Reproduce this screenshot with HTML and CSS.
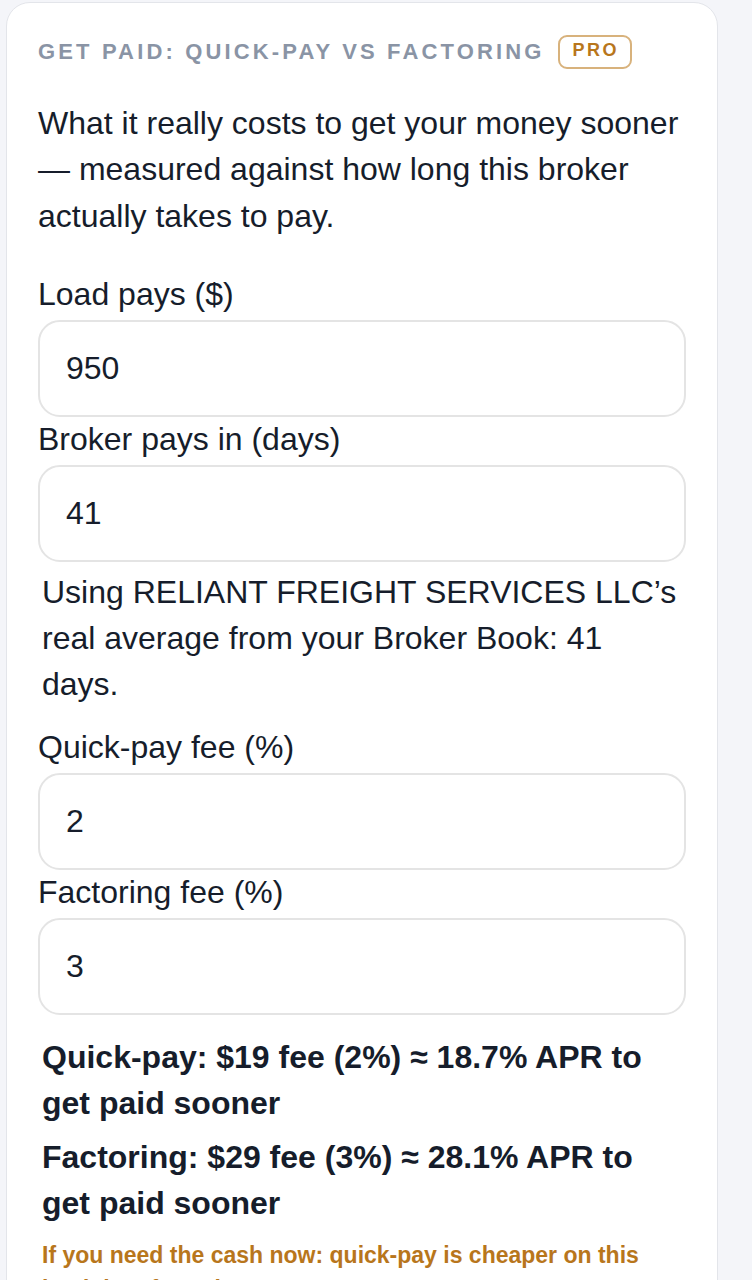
FILE: index.html
```html
<!DOCTYPE html>
<html>
<head>
	<meta charset="utf-8">
	<meta name="viewport" content="width=device-width, initial-scale=1">
	<title>Get paid: quick-pay vs factoring</title>
	<link rel="stylesheet" href="styles.css">
</head>
<body>

  <section class="card">

    <header class="card-head">
      <h2 class="card-title">Get paid: Quick-pay vs factoring</h2>
      <span class="badge">PRO</span>
    </header>

    <p class="intro">What it really costs to get your money sooner — measured against how long this broker actually takes to pay.</p>

    <form class="calc">
      <label for="load">Load pays ($)</label>
      <input type="text" id="load" name="load" value="950">

      <label for="days">Broker pays in (days)</label>
      <input type="text" id="days" name="days" value="41">
      <!-- pulled from the broker book -->
      <p class="note">Using RELIANT FREIGHT SERVICES LLC’s real average from your Broker Book: 41 days.</p>

      <label for="qp" class="spaced">Quick-pay fee (%)</label>
      <input type="text" id="qp" name="qp" value="2">

      <label for="fact">Factoring fee (%)</label>
      <input type="text" id="fact" name="fact" value="3">
    </form>

    <div class="results">
      <p class="result">Quick-pay: $19 fee (2%) ≈ 18.7% APR to get paid sooner</p>
      <p class="result">Factoring: $29 fee (3%) ≈ 28.1% APR to get paid sooner</p>
      <p class="verdict">If you need the cash now: quick-pay is cheaper on this load than factoring.</p>
    </div>

  </section>

</body>
</html>
```

FILE: styles.css
```css
html body{
  margin: 0;
  background: #f4f5f9;
  font-family: "Liberation Sans", Arial, sans-serif;
  color: #161d2b;
}

.card{
  box-sizing: border-box;
  width: 712px;
  margin: 2px 0 0 6px;
  padding: 32px 31px 40px 31px;
  background: #ffffff;
  border: 1.5px solid #e3e5ea;
  border-radius: 24px;
  min-height: 1400px;
}

.card-head{
  display: flex;
  align-items: center;
  gap: 13px;
  height: 34px;
}

.card-title{
  margin: 0;
  font-size: 22px;
  font-weight: 700;
  letter-spacing: 0.143em;
  text-transform: uppercase;
  color: #8a94a5;
  line-height: 34px;
}

.badge{
  box-sizing: border-box;
  height: 34px;
  padding: 0 11px 0 13px;
  border: 2px solid #d8b27c;
  border-radius: 9px;
  font-size: 18px;
  font-weight: 700;
  letter-spacing: 0.14em;
  line-height: 27px;
  color: #b8761c;
}

.intro{
  margin: 31px 0 0 0;
  font-size: 32px;
  line-height: 46.4px;
}

.calc{
  margin-top: 33px;
}

.calc label{
  display: block;
  font-size: 32px;
  line-height: 45px;
}

.calc input{
  display: block;
  box-sizing: border-box;
  width: 100%;
  height: 97px;
  margin: 3px 0 0 0;
  padding: 0 26px;
  border: 2px solid #e4e4e4;
  border-radius: 22px;
  background: #ffffff;
  font-family: "Liberation Sans", Arial, sans-serif;
  font-size: 32px;
  color: #161d2b;
  outline: none;
}

.note{
  margin: 7px 0 0 0;
  padding: 0 4px;
  font-size: 32px;
  line-height: 46px;
}

.calc .spaced{
  margin-top: 18px;
}

.results{
  margin-top: 19px;
  padding: 0 4px;
}

.result{
  margin: 0 0 8px 0;
  font-size: 32px;
  font-weight: 700;
  line-height: 46px;
}

.verdict{
  margin: 13px 0 0 0;
  font-size: 23px;
  font-weight: 700;
  line-height: 33.4px;
  color: #b8761c;
}
```
